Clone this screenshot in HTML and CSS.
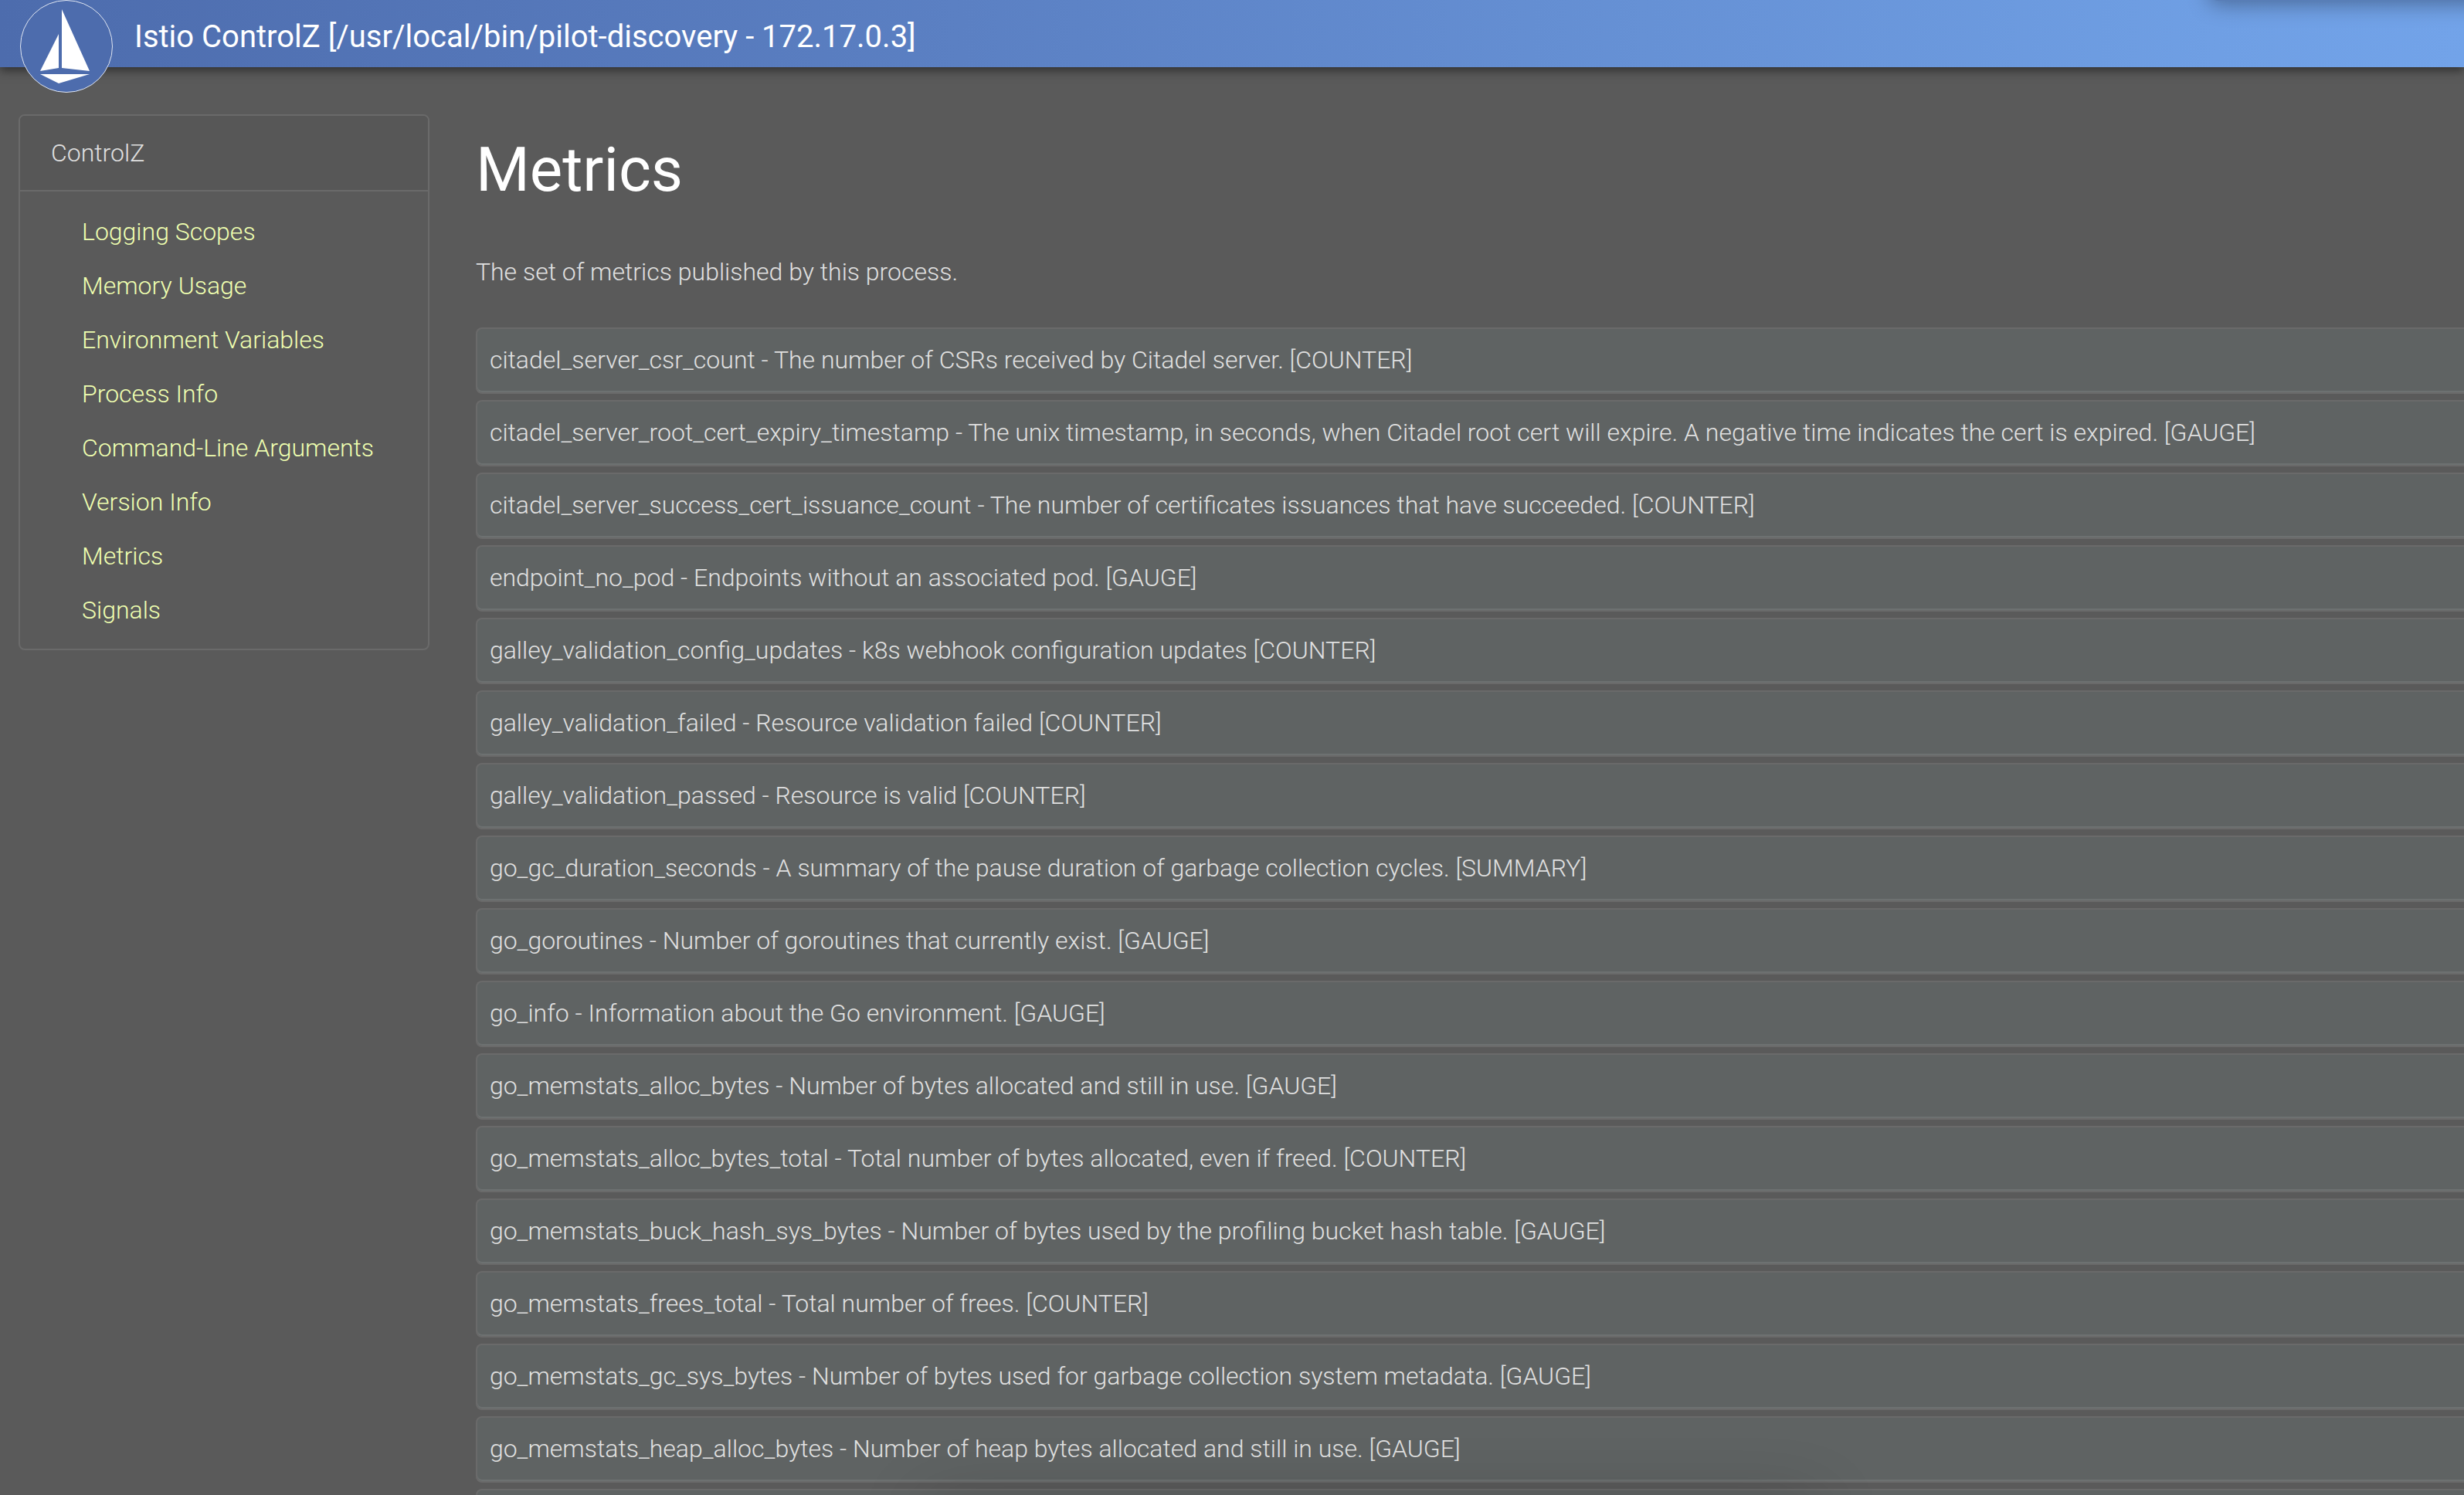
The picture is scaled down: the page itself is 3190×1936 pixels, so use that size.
FILE: index.html
```html
<!DOCTYPE html>
<html lang="en">
<head>
<meta charset="utf-8">
<title>Istio ControlZ</title>
<link rel="stylesheet" href="styles.css">
</head>
<body>
<header class="topbar">
  <a class="brand" href="#">
    <svg class="logo" viewBox="0 0 120 120" aria-hidden="true">
      <circle cx="60" cy="60" r="59.5" fill="#4d6cad" stroke="#dfe5f1" stroke-width="1"/>
      <path fill="#fff" d="M54 12 90 92 54 88ZM50 44V88L26 92ZM26 96H90L50 108Z"/>
    </svg>
    <span class="brand-name">Istio ControlZ [/usr/local/bin/pilot-discovery - 172.17.0.3]</span>
  </a>
</header>
<div class="layout">
  <nav class="sidebar" aria-label="ControlZ">
    <div class="sidebar-title">ControlZ</div>
    <ul class="topics">
      <li><a href="#">Logging Scopes</a></li>
      <li><a href="#">Memory Usage</a></li>
      <li><a href="#">Environment Variables</a></li>
      <li><a href="#">Process Info</a></li>
      <li><a href="#">Command-Line Arguments</a></li>
      <li><a href="#">Version Info</a></li>
      <li><a href="#">Metrics</a></li>
      <li><a href="#">Signals</a></li>
    </ul>
  </nav>
  <main class="content">
    <h1>Metrics</h1>
    <p class="intro">The set of metrics published by this process.</p>
    <ul class="metrics">
      <li>citadel_server_csr_count - The number of CSRs received by Citadel server. [COUNTER]</li>
      <li>citadel_server_root_cert_expiry_timestamp - The unix timestamp, in seconds, when Citadel root cert will expire. A negative time indicates the cert is expired. [GAUGE]</li>
      <li>citadel_server_success_cert_issuance_count - The number of certificates issuances that have succeeded. [COUNTER]</li>
      <li>endpoint_no_pod - Endpoints without an associated pod. [GAUGE]</li>
      <li>galley_validation_config_updates - k8s webhook configuration updates [COUNTER]</li>
      <li>galley_validation_failed - Resource validation failed [COUNTER]</li>
      <li>galley_validation_passed - Resource is valid [COUNTER]</li>
      <li>go_gc_duration_seconds - A summary of the pause duration of garbage collection cycles. [SUMMARY]</li>
      <li>go_goroutines - Number of goroutines that currently exist. [GAUGE]</li>
      <li>go_info - Information about the Go environment. [GAUGE]</li>
      <li>go_memstats_alloc_bytes - Number of bytes allocated and still in use. [GAUGE]</li>
      <li>go_memstats_alloc_bytes_total - Total number of bytes allocated, even if freed. [COUNTER]</li>
      <li>go_memstats_buck_hash_sys_bytes - Number of bytes used by the profiling bucket hash table. [GAUGE]</li>
      <li>go_memstats_frees_total - Total number of frees. [COUNTER]</li>
      <li>go_memstats_gc_sys_bytes - Number of bytes used for garbage collection system metadata. [GAUGE]</li>
      <li>go_memstats_heap_alloc_bytes - Number of heap bytes allocated and still in use. [GAUGE]</li>
      <li></li>
    </ul>
  </main>
</div>
<div class="shade shade-top"></div>
<div class="shade shade-bottom"></div>
</body>
</html>
```
FILE: styles.css
```css
* { box-sizing: border-box; }

body {
  margin: 0;
  height: 100vh;
  overflow: hidden;
  background: #5a5a5a;
  color: #e0e0e0;
  font: 300 32px/48px Roboto, sans-serif;
}

ul { margin: 0; padding: 0; list-style: none; }
a { text-decoration: none; }

.topbar {
  position: relative;
  height: 87px;
  padding-left: 26px;
  background: linear-gradient(90deg, #4d6cad, #5b80c3 39%, #6f9fe4 90%, #72a3e9);
  box-shadow: 0 4px 12px rgba(0, 0, 0, .5);
}

.brand { display: inline-flex; color: #fff; }
.logo { width: 120px; height: 120px; }
.brand-name { margin-left: 28px; font-size: 40px; font-weight: 400; line-height: 96px; }

.layout {
  display: flex;
  align-items: flex-start;
  gap: 60px;
  padding: 61px 0 0 24px;
}

.sidebar {
  flex: none;
  width: 16.8%;
  border: 2px solid #6a6a6a;
  border-radius: 8px;
}

.sidebar-title {
  padding: 24px 40px;
  border-bottom: 2px solid #6a6a6a;
  background: #575757;
  border-radius: 6px 6px 0 0;
}

.topics { padding: 17px 80px 15px; }
.topics a { display: block; padding: 11px 0; color: #efffb0; white-space: nowrap; }

.content { flex: 1; min-width: 0; }

h1 {
  margin: 0;
  padding: 24px 0 20px;
  color: #fff;
  font-size: 80px;
  font-weight: 400;
  line-height: 96px;
}

.intro { margin: 40px 0 48px; }

.metrics { display: grid; gap: 8px; }

.metrics li {
  min-height: 86px;
  padding: 16px;
  border: 2px solid #6a6a6a;
  border-right: 0;
  border-radius: 8px 0 0 8px;
  background: #5f6363;
  box-shadow: inset 0 -2px #6d7171;
}

/* soft shadows of panels that sit just past the window's edge */
.shade { position: fixed; height: 40px; pointer-events: none; }
.shade-top {
  top: -39px;
  left: 2860px;
  right: -60px;
  border-radius: 12px;
  background: #587db7;
  box-shadow: 0 4px 28px rgba(0, 0, 0, .35);
}
.shade-bottom {
  bottom: -60px;
  left: 1200px;
  right: 840px;
  box-shadow: 0 0 90px rgba(0, 0, 0, .3);
}
```
